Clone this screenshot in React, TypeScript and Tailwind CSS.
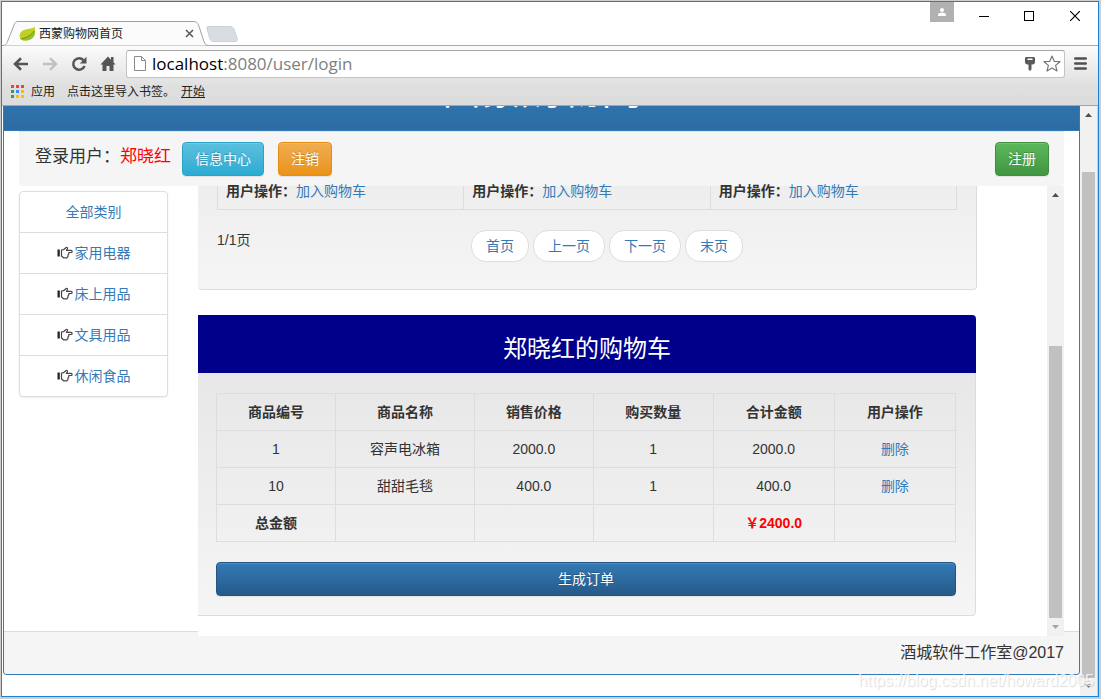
import type { ReactNode } from "react";

const categories = ["家用电器", "床上用品", "文具用品", "休闲食品"];

const pages = ["首页", "上一页", "下一页", "末页"];

const columns = [
  { title: "商品编号", width: "w-[16.1%]" },
  { title: "商品名称", width: "w-[18.8%]" },
  { title: "销售价格", width: "w-[16.1%]" },
  { title: "购买数量", width: "w-[16.2%]" },
  { title: "合计金额", width: "w-[16.4%]" },
  { title: "用户操作", width: "w-[16.4%]" },
];

const cartItems = [
  { id: 1, name: "容声电冰箱", price: "2000.0", count: 1, total: "2000.0" },
  { id: 10, name: "甜甜毛毯", price: "400.0", count: 1, total: "400.0" },
];

function LeafIcon() {
  return (
    <svg viewBox="0 0 17 15" className="w-[17px] h-[15px] shrink-0" aria-hidden="true">
      <path d="M15.5 0.5C14 3 10 2.6 6.5 3.5C2 4.6 -0.4 8.2 1 12C2 14.3 5 14.9 8.5 14.3C14 13.5 17.5 8 15.5 0.5Z" fill="#c3d021" />
      <path d="M1 12C5 12.5 12 10.5 16 4C17 9.5 13.5 13.7 8.5 14.3C5 14.9 2.2 14.5 1 12Z" fill="#9cc021" />
      <path d="M3 12.5C7 12 12 9.5 15 5" stroke="#5f9a1c" strokeWidth="1" fill="none" />
    </svg>
  );
}

function HandIcon() {
  return (
    <svg viewBox="0 0 16 13" className="mb-0.5 w-4 h-[13px] shrink-0" aria-hidden="true">
      <path d="M0.5 3.5h2.300v7h-2.300z" fill="#222" />
      <path
        d="M4.5 4v6l2 1.800h3.300l1.200-1.500v-1.500l0.800-1v-1.300h2.300c1.400 0 1.400-2.100 0-2.100h-4.600l0.900-1.700c0.400-1-0.800-1.600-1.500-1l-2.400 2z"
        fill="#fff"
        stroke="#444"
        strokeWidth="1.2"
        strokeLinejoin="round"
      />
    </svg>
  );
}

function Arrow({ up = false, className }: { up?: boolean; className: string }) {
  return (
    <svg viewBox="0 0 7 4" className={`w-[7px] h-1 ${className}`} aria-hidden="true">
      <path d={up ? "M0 4L3.5 0L7 4Z" : "M0 0L3.5 4L7 0Z"} fill="currentColor" />
    </svg>
  );
}

function TabStrip() {
  return (
    <div className="flex h-11 border-b border-[#a9a9a9] bg-white">
      <div className="relative -mb-px mt-[19px] h-[25px] w-[206px]">
        <svg viewBox="0 0 206 25" className="absolute inset-0 w-full h-full" aria-hidden="true">
          <path
            d="M0 24.5C3 24.5 4 24 5.5 20.5L12 4C13 1.5 14 0.5 16 0.5H192C194 0.5 195.5 1.5 196.5 4L202 20.5C203 23 204 24.5 206 24.5"
            fill="#fbfbfb"
            stroke="#a0a0a0"
          />
        </svg>
        <div className="relative flex h-full items-center pl-[17px] pr-3.5 text-xs text-[#222]">
          <LeafIcon />
          <span className="ml-[3px] flex-1">西蒙购物网首页</span>
          <button aria-label="关闭标签页">
            <svg viewBox="0 0 9 9" className="w-[9px] h-[9px]">
              <path d="M1 1L8 8M8 1L1 8" stroke="#5a5a5a" strokeWidth="1.6" />
            </svg>
          </button>
        </div>
      </div>
      <button aria-label="新建标签页" className="mt-6 h-4 w-8 self-start -ml-0.5">
        <svg viewBox="0 0 32 16" className="w-full h-full">
          <path d="M3 0.5H24C26 0.5 27 1 28 3L31 12C32 14.5 31 15.5 29 15.5H8C6 15.5 5 15 4 13L1 3C0.5 1 1 0.5 3 0.5Z" fill="#d8dde4" stroke="#ced1d6" />
        </svg>
      </button>
      <div className="ml-auto flex items-start text-black">
        <button aria-label="用户" className="flex h-5 w-6 items-center justify-center bg-[#b1b1b1]">
          <svg viewBox="0 0 8 8" className="w-2 h-2" fill="#fff">
            <circle cx="4" cy="2" r="2" />
            <path d="M0 8V6.5C0.5 5 2 4.8 4 4.8S7.5 5 8 6.5V8Z" />
          </svg>
        </button>
        <button aria-label="最小化" className="ml-[25px] mt-[9px] h-[11px] w-2.5">
          <svg viewBox="0 0 10 11" className="w-full h-full">
            <path d="M0 5.5H10" stroke="#000" />
          </svg>
        </button>
        <button aria-label="最大化" className="ml-[35px] mt-[9px] h-2.5 w-2.5 border border-black"></button>
        <button aria-label="关闭" className="ml-9 mr-[18px] mt-[9px] h-2.5 w-2.5">
          <svg viewBox="0 0 10 10" className="w-full h-full">
            <path d="M0 0L10 10M10 0L0 10" stroke="#000" strokeWidth="1.2" />
          </svg>
        </button>
      </div>
    </div>
  );
}

function AddressBar() {
  return (
    <div className="flex h-[35px] items-center pl-[11px] pr-[11px] text-[#555]">
      <button aria-label="后退">
        <svg viewBox="0 0 16 14" className="w-4 h-3.5" fill="none" stroke="#555" strokeWidth="2.6">
          <path d="M15 7H2.5M8 1.2L2 7L8 12.8" />
        </svg>
      </button>
      <button aria-label="前进" className="ml-[13px]">
        <svg viewBox="0 0 16 14" className="w-4 h-3.5" fill="none" stroke="#c0c0c0" strokeWidth="2.4">
          <path d="M1 7H13.5M8 1.2L14 7L8 12.8" />
        </svg>
      </button>
      <button aria-label="重新加载" className="ml-[13px]">
        <svg viewBox="0 0 16 16" className="w-4 h-4">
          <path d="M12.5 4.2A5.8 5.8 0 1 0 13.5 10" fill="none" stroke="#555" strokeWidth="2.5" />
          <path d="M15.5 0.8V7.5H8.8Z" fill="#555" />
        </svg>
      </button>
      <button aria-label="主页" className="ml-[13px]">
        <svg viewBox="0 0 16 15" className="w-4 h-[15px]" fill="#555">
          <path d="M8 0.5L0.5 8.5H2.5V15H6.5V10H9.5V15H13.5V8.5H15.5L13.5 6.3V1H11V3.7Z" />
        </svg>
      </button>
      <div className="ml-2.5 flex h-7 min-w-0 flex-1 items-center rounded-[3px] border border-[#c3c3c3] border-t-[#a5a5a5] bg-white pl-[7px] pr-[3px]">
        <svg viewBox="0 0 12 15" className="w-3 h-[15px] shrink-0" fill="#fff" stroke="#8a8a8a" aria-hidden="true">
          <path d="M0.5 0.5H7.5L11.5 4.5V14.5H0.5ZM7.5 0.5V4.5H11.5" />
        </svg>
        <p className="ml-1.5 flex-1 font-['Open_Sans',sans-serif] text-[17px] leading-6 text-[#808080]">
          <span className="text-black">localhost</span>:8080/user/login
        </p>
        <svg viewBox="0 0 10 14" className="w-2.5 h-3.5" aria-label="密码">
          <path d="M1.5 0H8.5C9.5 0 10 0.5 10 1.5V5C10 6.5 9 7.5 7.5 7.5H6.5V12.5L5 14L3.5 12.5V7.5H2.5C1 7.5 0 6.5 0 5V1.5C0 0.5 0.5 0 1.5 0ZM2.5 1.5V3H7.5V1.5Z" fill="#5a5a5a" fillRule="evenodd" />
        </svg>
        <button aria-label="收藏" className="ml-2">
          <svg viewBox="0 0 18 17" className="w-[18px] h-[17px]" fill="#fff" stroke="#777" strokeWidth="1.2" strokeLinejoin="round">
            <path d="M9 1L11.2 6.3L17 6.7L12.6 10.4L14 16L9 13L4 16L5.4 10.4L1 6.7L6.8 6.3Z" />
          </svg>
        </button>
      </div>
      <button aria-label="菜单" className="ml-[9px]">
        <svg viewBox="0 0 13 13" className="w-[13px] h-[13px]" stroke="#505050" strokeWidth="2.6" strokeLinecap="round">
          <path d="M1.3 1.5H11.7M1.3 6.5H11.7M1.3 11.5H11.7" />
        </svg>
      </button>
    </div>
  );
}

function BookmarkBar() {
  const colors = ["#e8453c", "#e8453c", "#e8453c", "#2ba24c", "#4285f4", "#fbbc05", "#2ba24c", "#fbbc05", "#fbbc05"];
  return (
    <div className="flex h-6 items-center pb-0.5 pl-[9px] text-xs text-[#222]">
      <svg viewBox="0 0 13 13" className="mb-0.5 w-[13px] h-[13px]" aria-hidden="true">
        {colors.map((color, i) => (
          <rect key={i} x={(i % 3) * 5} y={Math.floor(i / 3) * 5} width="3" height="3" fill={color} />
        ))}
      </svg>
      <a href="#" className="ml-[7px]">应用</a>
      <span className="ml-3">点击这里导入书签。</span>
      <a href="#" className="ml-1.5 underline">开始</a>
    </div>
  );
}

function Button({ className, children }: { className: string; children: ReactNode }) {
  return (
    <button
      className={`h-[34px] rounded border px-3 text-sm text-white shadow-[inset_0_1px_0_rgba(255,255,255,0.15),0_1px_1px_rgba(0,0,0,0.075)] [text-shadow:0_-1px_0_rgba(0,0,0,0.2)] ${className}`}
    >
      {children}
    </button>
  );
}

function UserBar() {
  return (
    <nav className="flex h-[55px] items-center rounded-b border-t border-[#e3e3e3] bg-[#f5f5f5] pl-4 pr-[15px]">
      <p className="mb-1 text-[17px] text-[#333]">
        登录用户：<span className="text-[#f00]">郑晓红</span>
      </p>
      <Button className="ml-[11px] border-[#28a4c9] bg-linear-to-b from-[#5bc0de] to-[#2aabd2]">信息中心</Button>
      <Button className="ml-3.5 border-[#e38d13] bg-linear-to-b from-[#f0ad4e] to-[#eb9316]">注销</Button>
      <Button className="ml-auto border-[#3e8f3e] bg-linear-to-b from-[#5cb85c] to-[#419641]">注册</Button>
    </nav>
  );
}

function Sidebar() {
  return (
    <ul className="mt-[5px] w-[149px] shrink-0 self-start divide-y divide-[#ddd] rounded border border-[#ddd] bg-white text-sm leading-5 text-[#337ab7] shadow-[0_1px_2px_rgba(0,0,0,0.075)]">
      <li className="flex h-10 items-center justify-center box-content">
        <a href="#">全部类别</a>
      </li>
      {categories.map((name) => (
        <li key={name} className="flex h-10 items-center justify-center box-content">
          <a href="#" className="flex items-center gap-0.5">
            <HandIcon />
            {name}
          </a>
        </li>
      ))}
    </ul>
  );
}

function ProductPanel() {
  return (
    <section className="-mr-px rounded-b border border-l-0 border-t-0 border-[#dcdcdc] bg-linear-to-b from-[#eee] to-[#f5f5f5] pb-[27px] pl-[19px] pr-[19px]">
      <table className="w-full table-fixed border-collapse text-sm leading-5 text-[#333]">
        <tbody>
          <tr>
            {[1, 2, 3].map((n) => (
              <td key={n} className="border border-t-0 border-[#ddd] px-2 pb-2">
                {/* the top of this line is scrolled under the user bar */}
                <div className="-mt-[5px]">
                  <b>用户操作：</b>
                  <a href="#" className="text-[#337ab7]">加入购物车</a>
                </div>
              </td>
            ))}
          </tr>
        </tbody>
      </table>
      <div className="mt-5 flex">
        <span className="w-10 text-sm leading-5 text-[#333]">1/1页</span>
        <ul className="flex flex-1 justify-center gap-1">
          {pages.map((page) => (
            <li key={page}>
              <a href="#" className="block rounded-[15px] border border-[#ddd] bg-white px-[14px] py-[5px] text-sm leading-5 text-[#337ab7]">
                {page}
              </a>
            </li>
          ))}
        </ul>
      </div>
    </section>
  );
}

function CartPanel() {
  const cell = "h-[37px] border border-[#ddd] p-0";
  return (
    <section className="mt-[25px] overflow-hidden rounded-r border-b border-[#dcdcdc]">
      <h2 className="flex h-[58px] items-center justify-center bg-[#00008b] pt-2.5 text-2xl font-normal text-white">
        郑晓红的购物车
      </h2>
      <div className="rounded-br border-r border-[#dcdcdc] bg-linear-to-b from-[#e7e7e7] to-[#f5f5f5] pb-[19px] pl-[18px] pr-[19px] pt-5">
        <table className="w-full table-fixed border-collapse text-center text-sm leading-5 text-[#333]">
          <thead>
            <tr>
              {columns.map((col) => (
                <th key={col.title} className={`${cell} ${col.width}`}>{col.title}</th>
              ))}
            </tr>
          </thead>
          <tbody>
            {cartItems.map((item) => (
              <tr key={item.id}>
                <td className={cell}>{item.id}</td>
                <td className={cell}>{item.name}</td>
                <td className={cell}>{item.price}</td>
                <td className={cell}>{item.count}</td>
                <td className={cell}>{item.total}</td>
                <td className={cell}>
                  <a href="#" className="text-[#337ab7]">删除</a>
                </td>
              </tr>
            ))}
            <tr>
              <th className={cell}>总金额</th>
              <td className={cell}></td>
              <td className={cell}></td>
              <td className={cell}></td>
              <td className={`${cell} font-bold text-[#f00]`}>￥2400.0</td>
              <td className={cell}></td>
            </tr>
          </tbody>
        </table>
        <Button className="mt-5 block w-full border-[#245580] bg-linear-to-b from-[#337ab7] to-[#265a88]">生成订单</Button>
      </div>
    </section>
  );
}

export default function App() {
  return (
    <div className="flex min-h-screen flex-col bg-[#cdcdcd] pb-0.5 pl-px pr-0.5 pt-px font-['Liberation_Sans','Noto_Sans_CJK_SC',sans-serif]">
      <div className="relative flex flex-1 flex-col border border-[#1883d7] bg-white">
        <TabStrip />
        <div className="border-b border-[#a5a5a5] bg-linear-to-b from-[#fbfbfb] via-[#dfdfdf] via-70% to-[#dcdcdc]">
          <AddressBar />
          <BookmarkBar />
        </div>

        <div className="flex flex-1">
          {/* Page */}
          <div className="min-w-0 flex-1 pl-px">
            <div className="overflow-hidden rounded-b border border-t-0 border-[#337ab7]">
              <header className="flex h-[25px] items-end justify-center overflow-hidden border-b border-[#337ab7] bg-linear-to-b from-[#2f73ac] to-[#2d6ca2]">
                {/* only the lower edge of the title is left in view */}
                <h1 className="mb-5 text-[40px] leading-10 text-white">西蒙购物网</h1>
              </header>
              <div className="px-[15px]">
                <UserBar />
                <div className="flex">
                  <Sidebar />
                  <div className="relative -mb-[5px] ml-[30px] flex min-w-0 flex-1 bg-white">
                    <main className="mr-[71px] min-w-0 flex-1 pb-5">
                      <ProductPanel />
                      <CartPanel />
                    </main>
                    <div className="flex w-[17px] flex-col items-center bg-[#f1f1f1]">
                      <Arrow up className="mt-[7px] text-[#505050]" />
                      <div className="mb-4 mt-auto h-[272px] w-[13px] bg-[#c1c1c1]"></div>
                      <Arrow className="-mt-[9px] mb-[7px] text-[#a3a3a3]" />
                    </div>
                  </div>
                </div>
              </div>
              <footer className="flex h-[43px] items-center justify-end border-t border-[#ddd] bg-[#f5f5f5] pr-[15px] text-base text-[#333]">
                酒城软件工作室@2017
              </footer>
            </div>
          </div>

          {/* Window scrollbar */}
          <div className="flex w-[18px] flex-col items-center border-r border-[#d0d0d0] bg-[#f1f1f1]">
            <Arrow up className="mt-[7px] text-[#505050]" />
            <div className="mt-[55px] w-[13px] flex-1 bg-[#c1c1c1]"></div>
            <Arrow className="mb-2 mt-[6px] text-[#808080]" />
          </div>
        </div>
        <p className="absolute bottom-[3px] right-1 text-base text-white/80 [text-shadow:1px_1px_1px_rgba(0,0,0,0.15)]">
          https://blog.csdn.net/howard2005
        </p>
      </div>
    </div>
  );
}
